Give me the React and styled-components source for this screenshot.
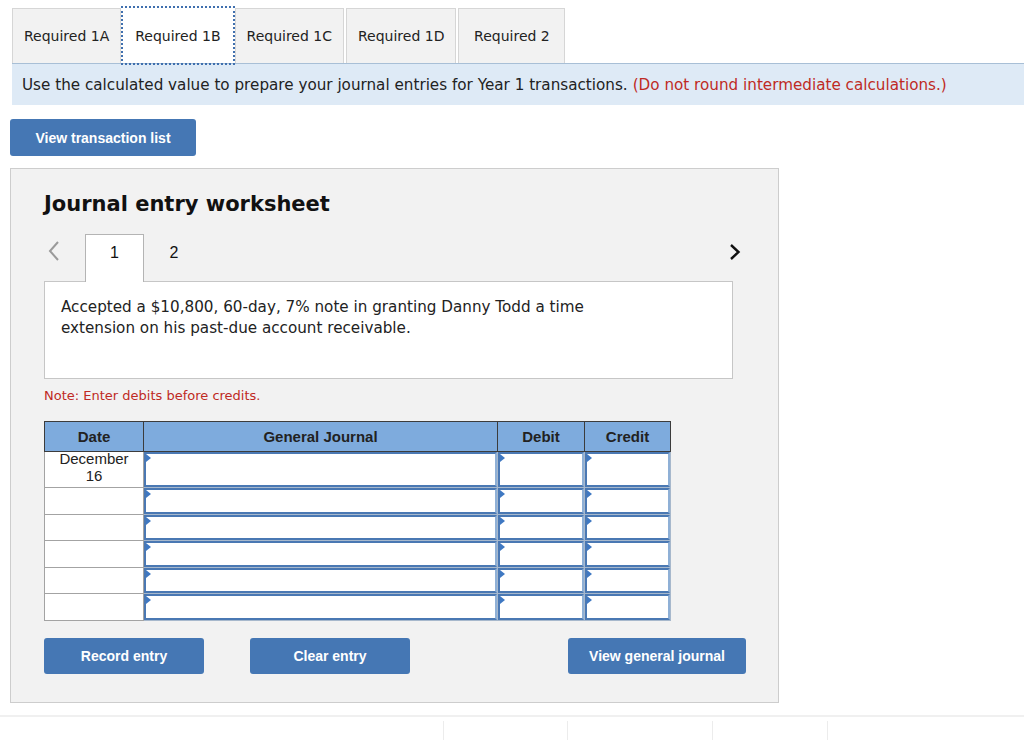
import styled, { createGlobalStyle } from 'styled-components'

const Global = createGlobalStyle`
  body {
    margin: 0;
    background: #fff;
    font-family: "DejaVu Sans", Verdana, sans-serif;
    color: #222;
  }
`

const Page = styled.div`
  padding-top: 8px;
`

const TabsRow = styled.div`
  display: flex;
  gap: 2px;
  padding-left: 12px;
`

const Tab = styled.div`
  box-sizing: border-box;
  min-width: 107px;
  height: 55px;
  padding: 0 11px;
  display: flex;
  align-items: center;
  justify-content: center;
  font-size: 14px;
  color: #222;
  background: ${p => (p.$active ? '#fff' : '#f2f2f2')};
  border: 1px solid ${p => (p.$active ? '#fff' : '#d6d6d6')};
  border-bottom: none;
  outline: ${p => (p.$active ? '2px dotted #3f6fae' : 'none')};
  outline-offset: 0;
  position: relative;
`

const Instruction = styled.div`
  margin-left: 12px;
  height: 42px;
  box-sizing: border-box;
  background: #deeaf6;
  border-top: 1px solid #a8bfd6;
  display: flex;
  align-items: center;
  padding-left: 10px;
  font-size: 15.2px;
  color: #222;
`

const Red = styled.span`
  color: #bf2a24;
  margin-left: 5px;
`

const Button = styled.button`
  flex-shrink: 0;
  width: ${p => p.$w || 160}px;
  height: ${p => p.$h || 36}px;
  background: #4577b4;
  color: #fff;
  border: none;
  border-radius: 3px;
  font-family: "Liberation Sans", Arial, sans-serif;
  font-weight: bold;
  font-size: 14px;
  padding: 0;
  margin-left: ${p => p.$ml || 0}px;
  cursor: pointer;
`

const TopButtonWrap = styled.div`
  padding: 14px 0 0 10px;
`

const Panel = styled.div`
  margin: 12px 0 0 10px;
  width: 769px;
  height: 535px;
  box-sizing: border-box;
  background: #f2f2f2;
  border: 1px solid #cdcdcd;
  padding: 22px 45px 0 33px;
`

const Title = styled.h2`
  margin: 0;
  font-size: 21px;
  line-height: 26px;
  font-weight: bold;
  color: #111;
`

const NavRow = styled.div`
  margin-top: 17px;
  height: 47px;
  display: flex;
  align-items: flex-start;
`

const Chevron = styled.div`
  width: ${p => p.$w}px;
  display: flex;
  justify-content: ${p => (p.$right ? 'flex-end' : 'flex-start')};
  padding: ${p => (p.$right ? '9px 0 0' : '6px 0 0 3px')};
  box-sizing: border-box;
  margin-left: ${p => (p.$right ? 'auto' : '0')};
  margin-right: ${p => (p.$right ? '-8px' : '0')};
`

const EntryTab = styled.div`
  width: ${p => p.$w}px;
  height: 48px;
  box-sizing: border-box;
  text-align: center;
  padding-top: 9px;
  font-family: "Liberation Sans", Arial, sans-serif;
  font-size: 16px;
  line-height: 18px;
  color: #111;
  background: ${p => (p.$active ? '#fff' : 'transparent')};
  border: 1px solid ${p => (p.$active ? '#b4b4b4' : 'transparent')};
  border-bottom: none;
  position: relative;
`

const DescBox = styled.div`
  height: 98px;
  box-sizing: border-box;
  background: #fff;
  border: 1px solid #c6c6c6;
  padding: 15px 16px;
`

const DescText = styled.p`
  margin: 0;
  max-width: 560px;
  font-size: 15.2px;
  line-height: 21px;
  color: #222;
`

const Note = styled.div`
  margin-top: 8px;
  font-size: 13px;
  line-height: 17px;
  color: #bf2a24;
`

const Table = styled.table`
  margin-top: 17px;
  border-collapse: collapse;
  table-layout: fixed;
  width: 626px;
  font-family: "Liberation Sans", Arial, sans-serif;
  border: 1px solid #9a9a9a;
`

const Th = styled.th`
  height: 29px;
  padding: 0;
  background: #7eabdd;
  border: 1px solid #3c3c3c;
  font-size: 15px;
  font-weight: bold;
  color: #222;
  text-align: center;
`

const Tr = styled.tr`
  height: ${p => p.$h}px;
`

const DateCell = styled.td`
  background: #fff;
  border: 1px solid #a3a3a3;
  font-size: 15px;
  line-height: 17px;
  text-align: center;
  vertical-align: top;
  padding: 0;
  color: #222;
`

const DateText = styled.span`
  display: block;
  margin-top: -2px;
`

const InputCell = styled.td`
  padding: 0;
  border: 1px solid #a7b8cc;
  background: #fff;
  position: relative;
`

const InputBox = styled.div`
  position: absolute;
  inset: 0;
  border: 2px solid #4a78b3;
  border-right-color: #8fb0d6;
  background: #fff;
  &::before {
    content: '';
    position: absolute;
    left: 0;
    top: 0;
    border-top: 4px solid transparent;
    border-bottom: 4px solid transparent;
    border-left: 5px solid #3f78c2;
  }
`

const ButtonRow = styled.div`
  margin-top: 17px;
  display: flex;
  gap: 46px;
`

const Footer = styled.div`
  margin-top: 12px;
  border-top: 2px solid #f0f0f0;
  display: grid;
  grid-template-columns: 443px 124px 145px 115px 1fr;
  padding-top: 4px;
`

const FooterCell = styled.div`
  height: 20px;
  border-left: ${p => (p.$first ? 'none' : '1px solid #ececec')};
`

const LeftChevron = () => (
  <svg width="14" height="22" viewBox="0 0 14 22">
    <path d="M11 2 L3 11 L11 20" fill="none" stroke="#9a9a9a" strokeWidth="2" />
  </svg>
)

const RightChevron = () => (
  <svg width="12" height="18" viewBox="0 0 12 18">
    <path d="M2 2 L9.5 9 L2 16" fill="none" stroke="#111" strokeWidth="2.4" />
  </svg>
)

const rows = [36, 27, 26, 27, 26, 27]

export default function App() {
  return (
    <Page>
      <Global />
      <TabsRow>
        <Tab>Required 1A</Tab>
        <Tab $active>Required 1B</Tab>
        <Tab>Required 1C</Tab>
        <Tab>Required 1D</Tab>
        <Tab>Required 2</Tab>
      </TabsRow>
      <Instruction>
        Use the calculated value to prepare your journal entries for Year 1 transactions.
        <Red>(Do not round intermediate calculations.)</Red>
      </Instruction>
      <TopButtonWrap>
        <Button $w={186} $h={37}>View transaction list</Button>
      </TopButtonWrap>
      <Panel>
        <Title>Journal entry worksheet</Title>
        <NavRow>
          <Chevron $w={41}><LeftChevron /></Chevron>
          <EntryTab $w={59} $active>1</EntryTab>
          <EntryTab $w={60}>2</EntryTab>
          <Chevron $w={40} $right><RightChevron /></Chevron>
        </NavRow>
        <DescBox>
          <DescText>
            Accepted a $10,800, 60-day, 7% note in granting Danny Todd a time extension on his past-due account receivable.
          </DescText>
        </DescBox>
        <Note>Note: Enter debits before credits.</Note>
        <Table>
          <colgroup>
            <col style={{ width: 99 }} />
            <col style={{ width: 354 }} />
            <col style={{ width: 87 }} />
            <col style={{ width: 86 }} />
          </colgroup>
          <thead>
            <tr>
              <Th>Date</Th>
              <Th>General Journal</Th>
              <Th>Debit</Th>
              <Th>Credit</Th>
            </tr>
          </thead>
          <tbody>
            {rows.map((h, i) => (
              <Tr key={i} $h={h}>
                <DateCell>{i === 0 ? <DateText>December<br />16</DateText> : null}</DateCell>
                <InputCell><InputBox /></InputCell>
                <InputCell><InputBox /></InputCell>
                <InputCell><InputBox /></InputCell>
              </Tr>
            ))}
          </tbody>
        </Table>
        <ButtonRow>
          <Button>Record entry</Button>
          <Button>Clear entry</Button>
          <Button $w={178} $ml={112}>View general journal</Button>
        </ButtonRow>
      </Panel>
      <Footer>
        <FooterCell $first />
        <FooterCell />
        <FooterCell />
        <FooterCell />
        <FooterCell />
      </Footer>
    </Page>
  )
}
